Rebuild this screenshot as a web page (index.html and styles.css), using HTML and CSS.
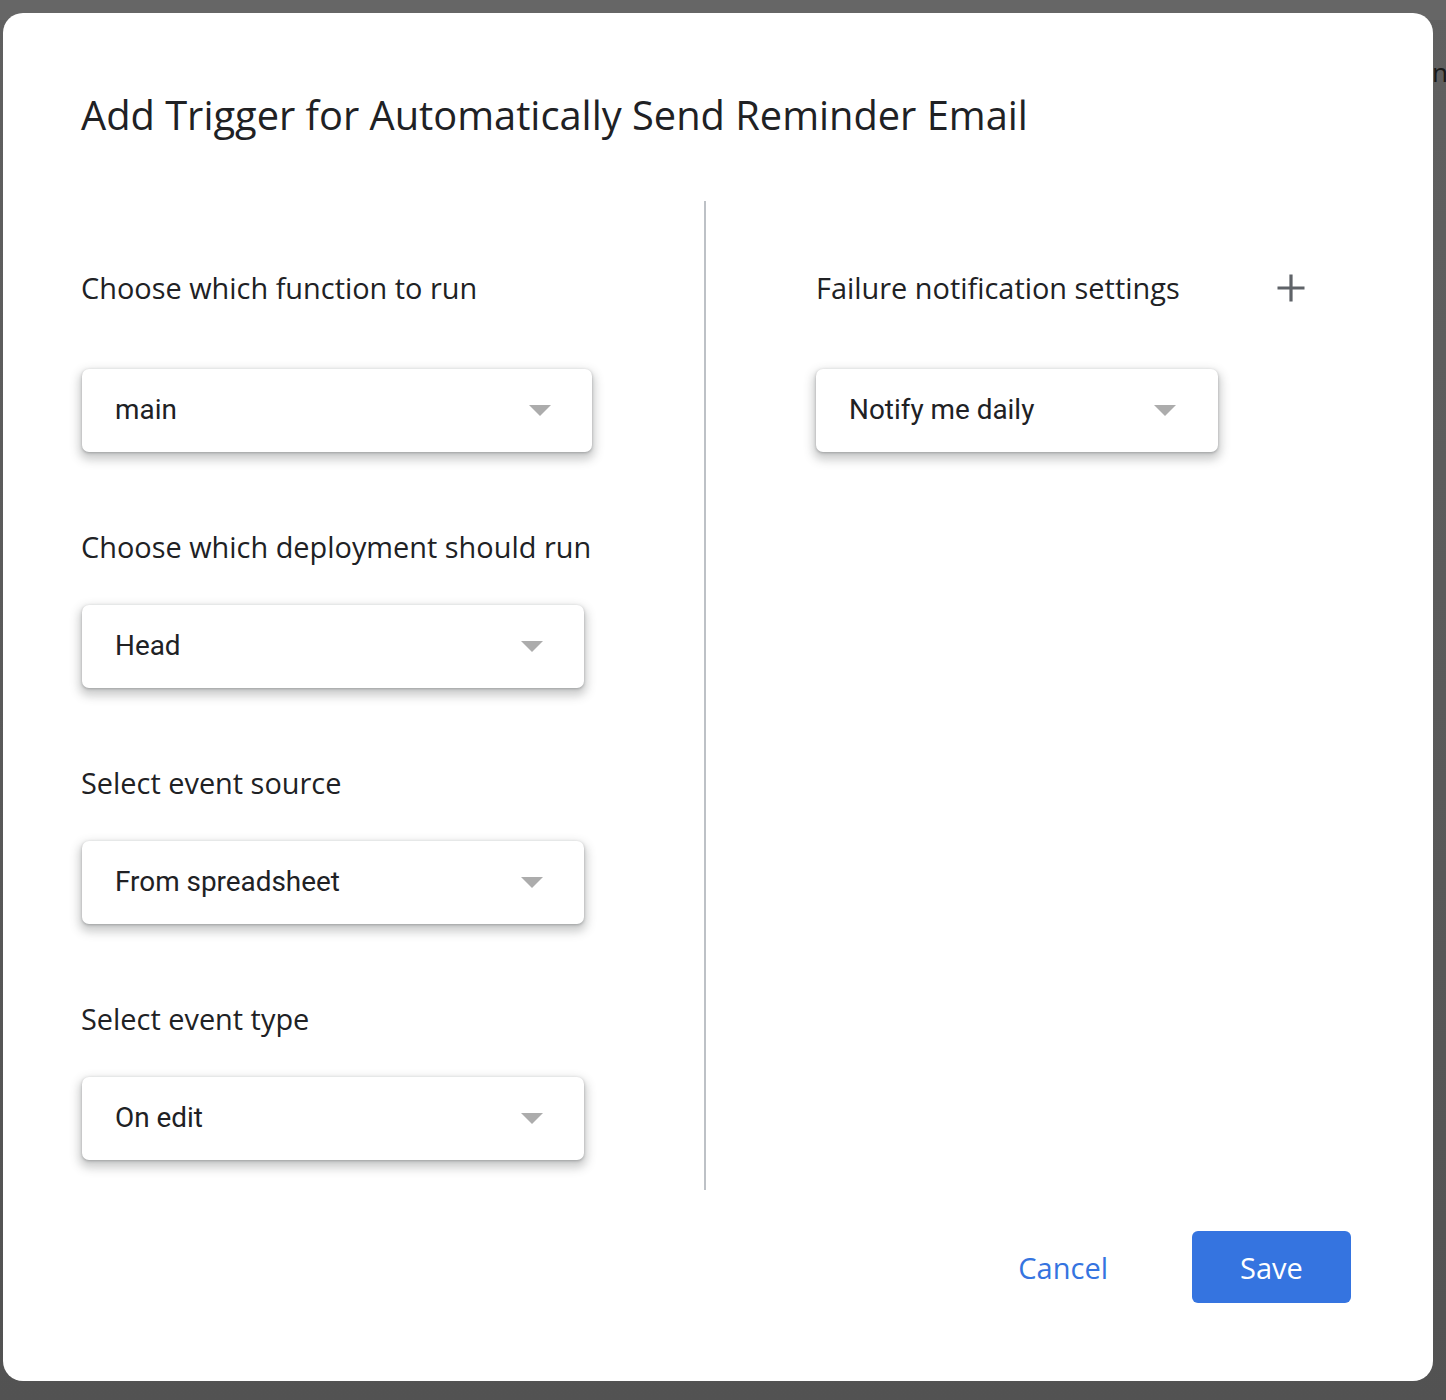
FILE: index.html
```html
<!DOCTYPE html>
<html lang="en">
<head>
<meta charset="utf-8">
<title>Add Trigger</title>
<link rel="stylesheet" href="styles.css">
</head>
<body>
<div class="backdrop">
  <div class="backdrop-top"></div>
  <span class="backdrop-text">n</span>
</div>
<div class="stage">
  <div class="dialog">
    <h1 class="title">Add Trigger for Automatically Send Reminder Email</h1>
    <div class="body">
      <div class="col-left">
        <div class="field first">
          <div class="label">Choose which function to run</div>
          <div class="select wide"><span class="value">main</span><span class="arrow"></span></div>
        </div>
        <div class="field">
          <div class="label">Choose which deployment should run</div>
          <div class="select"><span class="value">Head</span><span class="arrow"></span></div>
        </div>
        <div class="field">
          <div class="label">Select event source</div>
          <div class="select"><span class="value">From spreadsheet</span><span class="arrow"></span></div>
        </div>
        <div class="field">
          <div class="label">Select event type</div>
          <div class="select"><span class="value">On edit</span><span class="arrow"></span></div>
        </div>
      </div>
      <div class="divider"></div>
      <div class="col-right">
        <div class="field first">
          <div class="label-row">
            <div class="label">Failure notification settings</div>
            <svg class="plus" width="30" height="30" viewBox="0 0 30 30" aria-hidden="true"><path d="M15 1.5v27M1.5 15h27" stroke="#5f6368" stroke-width="3.2" fill="none"/></svg>
          </div>
          <div class="select notify"><span class="value">Notify me daily</span><span class="arrow"></span></div>
        </div>
      </div>
    </div>
    <div class="footer">
      <button class="btn btn-text">Cancel</button>
      <button class="btn btn-primary">Save</button>
    </div>
  </div>
</div>
</body>
</html>
```

FILE: styles.css
```css
html, body {
  margin: 0;
  padding: 0;
}

body {
  width: 1446px;
  height: 1400px;
  overflow: hidden;
  position: relative;
  background: linear-gradient(180deg, #606060 0%, #5a5a5a 50%, #525252 100%);
  font-family: "Open Sans", "Noto Sans", sans-serif;
}

.backdrop {
  position: absolute;
  inset: 0;
}

.backdrop-top {
  height: 20px;
  background: #666666;
}

.backdrop-text {
  position: absolute;
  left: 1432px;
  top: 54px;
  font-family: "Noto Sans", sans-serif;
  font-size: 26px;
  color: #1a1a1a;
}

.stage {
  position: relative;
  padding: 13px 0 0 3px;
}

.dialog {
  width: 1430px;
  height: 1368px;
  box-sizing: border-box;
  background: #ffffff;
  border-radius: 20px;
  padding: 78px 82px 0 78px;
  display: flex;
  flex-direction: column;
}

.title {
  margin: 0;
  font-weight: 400;
  font-size: 39.8px;
  line-height: 48px;
  color: #202124;
  letter-spacing: 0;
}

.body {
  display: flex;
  margin-top: 62px;
}

.col-left {
  width: 623px;
  padding: 69px 0 30px 0;
  display: flex;
  flex-direction: column;
}

.divider {
  width: 2px;
  background: #bdc1c6;
  flex: none;
}

.col-right {
  padding: 69px 0 0 110px;
  flex: 1;
}

.field {
  display: flex;
  flex-direction: column;
  align-items: flex-start;
  margin-top: 77px;
}

.field.first {
  margin-top: 0;
}

.label {
  font-size: 28.9px;
  line-height: 36px;
  color: #202124;
  white-space: nowrap;
}

.label-row {
  display: flex;
  align-items: center;
  width: 490px;
  justify-content: space-between;
}

.select {
  margin-top: 40px;
  margin-left: 1px;
  width: 502px;
  height: 83px;
  box-sizing: border-box;
  border-radius: 7px;
  background: #ffffff;
  box-shadow: 0 1px 3px rgba(60, 64, 67, 0.35), 0 5px 10px 3px rgba(60, 64, 67, 0.26);
  display: flex;
  align-items: center;
  justify-content: space-between;
  padding: 0 41px 0 33px;
}

.field.first .select {
  margin-top: 63px;
}

.select.wide {
  width: 510px;
}

.select.notify {
  width: 402px;
  margin-left: 0;
  padding-right: 42px;
}

.value {
  font-family: Roboto, "Noto Sans", sans-serif;
  font-size: 27.9px;
  color: #202124;
  margin-top: -2px;
}

.arrow {
  width: 0;
  height: 0;
  border-left: 11.5px solid transparent;
  border-right: 11.5px solid transparent;
  border-top: 11px solid #acacac;
  margin-top: 0;
}

.plus {
  display: block;
  margin-right: 0;
}

.footer {
  display: flex;
  justify-content: flex-end;
  align-items: center;
  gap: 60px;
  margin-top: 41px;
}

.btn {
  font-family: "Open Sans", "Noto Sans", sans-serif;
  font-size: 29px;
  border: none;
  cursor: pointer;
  height: 72px;
  border-radius: 6px;
}

.btn-text {
  background: transparent;
  color: #3574e0;
  padding: 0 24px;
}

.btn-primary {
  background: #3574e0;
  color: #ffffff;
  width: 159px;
}
```
